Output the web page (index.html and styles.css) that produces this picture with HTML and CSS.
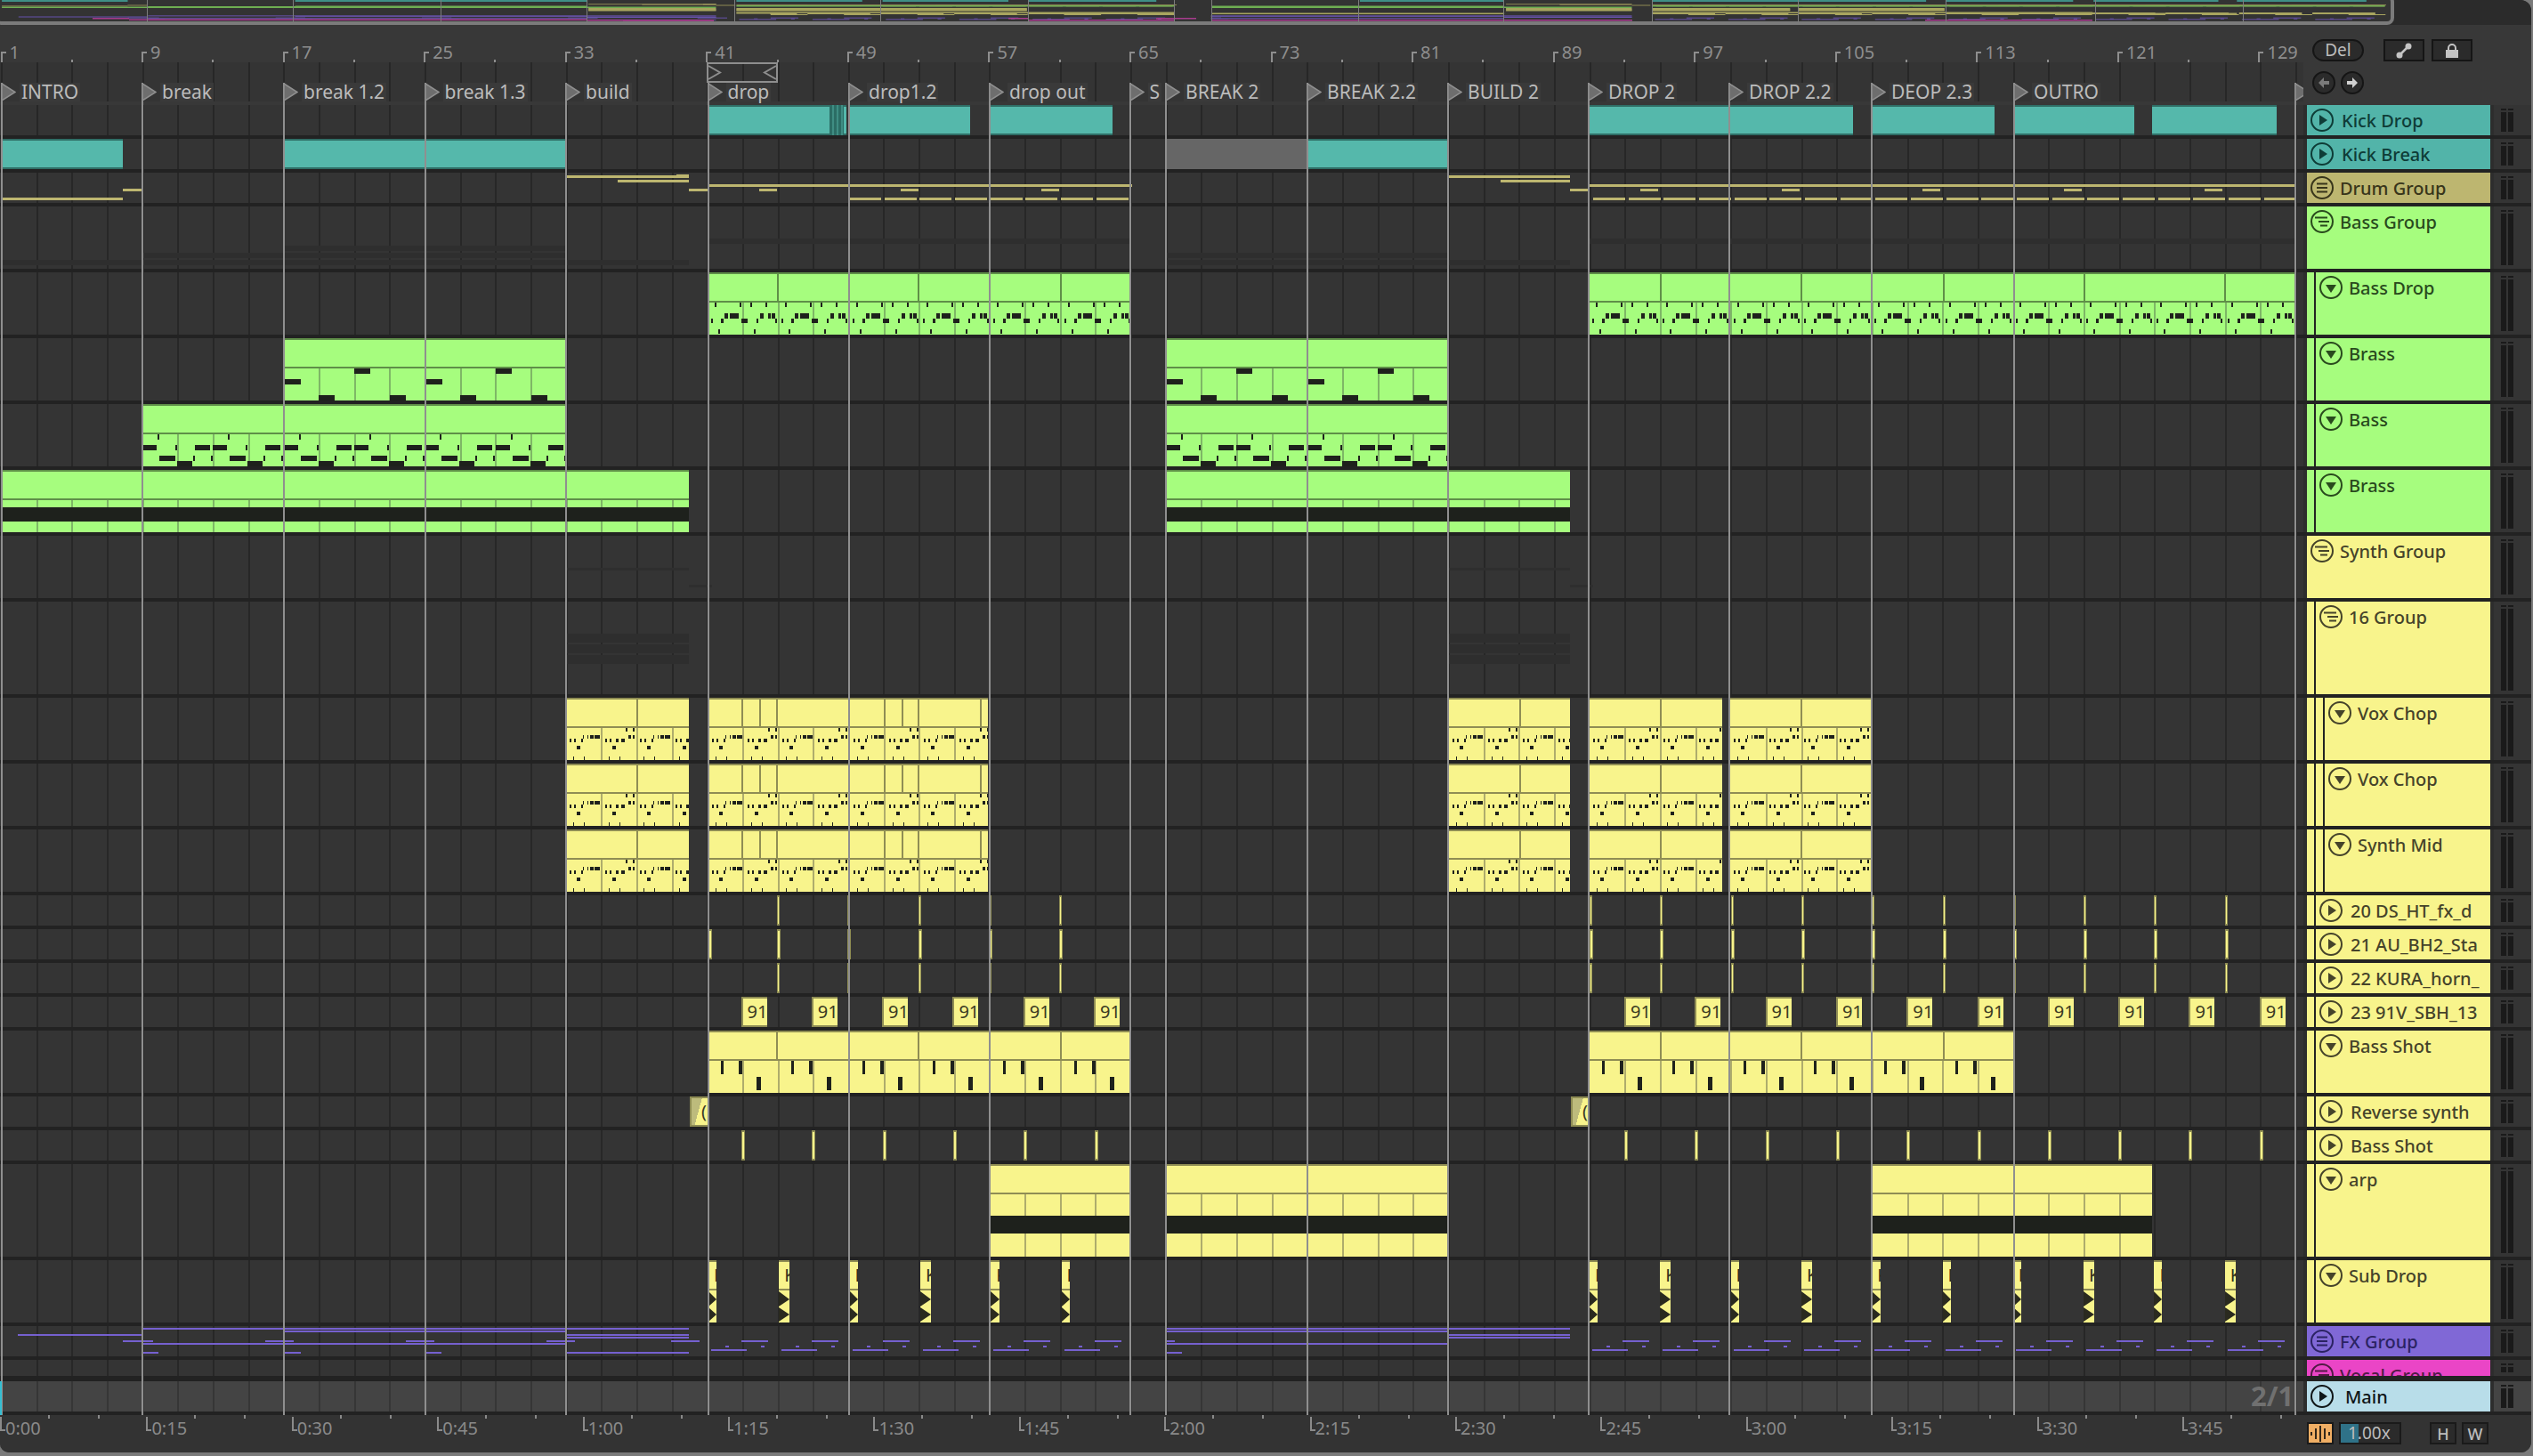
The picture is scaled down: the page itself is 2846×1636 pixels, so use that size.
FILE: index.html
```html
<!DOCTYPE html>
<html lang="en">
<head>
    <meta charset="UTF-8">
    <title>Arrangement View</title>
    <link rel="stylesheet" href="styles.css">
</head>
<body>
    <div class="app">
        <div class="overview" id="overview">
            <div class="overview-frame"></div>
        </div>

        <div class="top">
            <div class="timeline">
                <div class="ruler" id="ruler"></div>
                <div class="loop-lane grid">
                    <svg class="loop-brace" width="80" height="23" viewBox="0 0 80 23">
                        <rect x="1" y="1" width="78" height="21" fill="none" stroke="#8e8e8e" stroke-width="2"/>
                        <polyline points="2,4 15,11.500 2,19" fill="none" stroke="#8e8e8e" stroke-width="2"/>
                        <polyline points="78,4 65,11.500 78,19" fill="none" stroke="#8e8e8e" stroke-width="2"/>
                    </svg>
                </div>
            </div>
            <div class="top-controls">
                <div class="control-row">
                    <button class="pill">Del</button>
                    <button class="square-btn">
                        <svg width="22" height="22" viewBox="0 0 22 22">
                            <line x1="6" y1="16" x2="16" y2="6" stroke="#c4c4c4" stroke-width="2.500"/>
                            <circle cx="6" cy="16" r="3.500" fill="#c4c4c4"/>
                            <circle cx="16" cy="6" r="3.500" fill="#c4c4c4"/>
                        </svg>
                    </button>
                    <button class="square-btn">
                        <svg width="22" height="22" viewBox="0 0 22 22">
                            <path d="M7 11 V8 a4 4 0 0 1 8 0 V11" fill="none" stroke="#c4c4c4" stroke-width="2"/>
                            <rect x="4" y="10" width="14" height="9" fill="#c4c4c4"/>
                        </svg>
                    </button>
                </div>
                <div class="control-row arrows">
                    <button class="circle-btn">
                        <svg width="18" height="18" viewBox="0 0 18 18">
                            <path d="M9 3 L3 9 L9 15 V11 H15 V7 H9 Z" fill="#7b7b7b"/>
                        </svg>
                    </button>
                    <button class="circle-btn">
                        <svg width="18" height="18" viewBox="0 0 18 18">
                            <path d="M9 3 L15 9 L9 15 V11 H3 V7 H9 Z" fill="#d0d0d0"/>
                        </svg>
                    </button>
                </div>
            </div>
        </div>

        <div class="tracks" id="tracks"></div>

        <div class="bottom">
            <div class="time-ruler" id="timeRuler"></div>
            <div class="bottom-controls">
                <button class="wave-btn">
                    <svg width="24" height="18" viewBox="0 0 24 18">
                        <path d="M2 7 V11 M7 3 V15 M12 0 V18 M17 3 V15 M22 7 V11" stroke="#33271a" stroke-width="2" fill="none"/>
                    </svg>
                </button>
                <div class="zoom-box">
                    <div class="zoom-fill"></div>
                    <span>1.00x</span>
                </div>
                <button class="key-btn first-key">H</button>
                <button class="key-btn">W</button>
            </div>
        </div>

        <div class="locators" id="locators"></div>
        <div class="grid-label">2/1</div>
        <div class="play-start"></div>
    </div>

    <script src="app.js"></script>
</body>
</html>
```

FILE: styles.css
```css
* {
    box-sizing: border-box;
}

body {
    margin: 0;
    width: 2846px;
    height: 1636px;
    overflow: hidden;
    background-color: #7a7a7a;
    font-family: "Noto Sans", sans-serif;
}

button {
    font-family: inherit;
    padding: 0;
    margin: 0;
}

.app {
    position: relative;
    width: 2844px;
    height: 1632px;
    background-color: #383838;
    border-radius: 0 12px 12px 10px;
    overflow: hidden;
}

/* overview strip */
.overview {
    position: relative;
    height: 28px;
    background-color: #2b2b2b;
}

.overview svg {
    position: absolute;
    left: 0;
    top: 0;
}

.overview-frame {
    position: absolute;
    left: -6px;
    top: -6px;
    width: 2696px;
    height: 34px;
    border: 4px solid #7b7b7b;
    border-radius: 8px;
}

/* ruler + loop brace */
.top {
    display: flex;
    height: 90px;
}

.timeline {
    width: 2588px;
    margin-right: 4px;
}

.ruler {
    position: relative;
    height: 42px;
}

.ruler-mark {
    position: absolute;
    top: 20px;
    height: 22px;
    padding-left: 10px;
    font-size: 20px;
    line-height: 22px;
    color: #8e8e8e;
}

.ruler-mark::before {
    content: "";
    position: absolute;
    left: 0;
    top: 10px;
    width: 4px;
    height: 12px;
    border-left: 2px solid #8e8e8e;
    border-top: 2px solid #8e8e8e;
}

.ruler-tick {
    position: absolute;
    top: 39px;
    width: 2px;
    height: 3px;
    background-color: #8e8e8e;
}

.grid {
    background-color: #343434;
    background-image: repeating-linear-gradient(90deg, transparent 0 1px, #272727 1px 3px, transparent 3px 39.660px);
}

.loop-lane {
    position: relative;
    height: 44px;
}

.loop-brace {
    position: absolute;
    left: 794px;
    top: 0;
}

.top-controls {
    padding: 16px 0 0 6px;
}

.control-row {
    display: flex;
    gap: 8px;
}

.arrows {
    margin-top: 11px;
    gap: 6px;
}

.pill {
    width: 58px;
    height: 25px;
    margin-right: 14px;
    border: 2px solid #151515;
    border-radius: 13px;
    background-color: #2b2b2b;
    color: #bcbcbc;
    font-size: 19px;
    line-height: 19px;
}

.square-btn {
    display: flex;
    align-items: center;
    justify-content: center;
    width: 46px;
    height: 25px;
    border: 2px solid #151515;
    background-color: #2b2b2b;
}

.circle-btn {
    display: flex;
    align-items: center;
    justify-content: center;
    width: 26px;
    height: 26px;
    border: 2px solid #151515;
    border-radius: 50%;
    background-color: #2b2b2b;
}

/* tracks */
.tracks {
    display: flex;
    flex-direction: column;
    gap: 4px;
    height: 1472px;
    background-color: #222;
}

.track {
    display: flex;
    flex-shrink: 0;
    background-color: #2d2d2d;
}

.track-main {
    margin-top: 2px;
}

.lane {
    position: relative;
    width: 2588px;
    margin-right: 4px;
    overflow: hidden;
}

.track-main .lane {
    background-color: #444;
    background-image: repeating-linear-gradient(90deg, transparent 0 1px, #363636 1px 3px, transparent 3px 39.660px);
}

.teal { --clip: #55b8ab; --edge: #2f6e66; --head: #52b4a9; --ink: #0e3c37; }
.olive { --clip: #bdb670; --edge: #7d7a4c; --head: #bdb670; --ink: #38351a; }
.green { --clip: #a6fd7e; --edge: #5f8f48; --soft: #7eb766; --head: #a6fd7e; --ink: #294a1d; }
.yellow { --clip: #f8f48c; --edge: #8f8d54; --soft: #aeac6c; --head: #f8f48c; --ink: #45432a; }
.purple { --clip: #7560cf; --head: #8068d6; --ink: #2b2363; }
.magenta { --head: #ea45c6; --ink: #521a45; }
.sky { --head: #b8dde9; --ink: #0f1517; }

.block {
    position: absolute;
    top: 0;
    bottom: 0;
    background-color: var(--clip);
    border-top: 2px solid var(--edge);
    border-bottom: 2px solid var(--edge);
}

.muted-block {
    position: absolute;
    top: 0;
    bottom: 0;
    background-color: #666;
}

.hatch {
    position: absolute;
    top: 0;
    bottom: 0;
    background-image: repeating-linear-gradient(90deg, #2b6d65 0 3px, #3f8d83 3px 5px);
}

.spike {
    position: absolute;
    top: 0;
    bottom: 0;
    background-color: var(--clip);
    border: 2px solid var(--edge);
    border-left-width: 1px;
    border-right-width: 1px;
}

.tag {
    position: absolute;
    top: 0;
    bottom: 0;
    padding-left: 5px;
    overflow: hidden;
    background-color: var(--clip);
    border-top: 2px solid var(--edge);
    border-bottom: 2px solid var(--edge);
    border-left: 2px solid var(--edge);
    color: #3a3922;
    font-size: 20px;
    line-height: 30px;
    white-space: nowrap;
}

.fade-tag {
    padding-left: 11px;
    background-image: linear-gradient(105deg, #bdbb7c 0 45%, var(--clip) 45%);
}

.ghost {
    position: absolute;
    background-color: #2e2e2e;
}

.line {
    position: absolute;
}

.clip {
    position: absolute;
    top: 0;
    bottom: 0;
    display: flex;
    flex-direction: column;
    overflow: hidden;
    background-color: var(--clip);
    border-top: 2px solid var(--edge);
}

.clip-title {
    position: relative;
    flex: 0 0 30px;
    border-bottom: 0;
    padding-left: 6px;
    color: #302f1b;
    font-size: 20px;
    line-height: 30px;
    white-space: nowrap;
}

.clip-notes {
    position: relative;
    flex: 1;
    border-top: 2px solid var(--edge);
}

.clip-notes svg {
    position: absolute;
    left: 0;
    top: 0;
}

.title-line {
    position: absolute;
    top: 0;
    bottom: 0;
    width: 2px;
    background-color: var(--edge);
}

.note-line {
    position: absolute;
    top: 0;
    bottom: 0;
    width: 2px;
    background-color: var(--soft);
}

.note {
    position: absolute;
    background-color: #1e211c;
}

/* track header */
.head {
    display: flex;
    width: 206px;
    margin-right: 4px;
    overflow: hidden;
}

.indent {
    flex: 0 0 8px;
    margin-top: -4px;
    background-color: var(--head);
    border-right: 0;
}

.indent-line {
    flex: 0 0 2px;
    margin-top: -4px;
    background-color: #222;
}

.head-body {
    flex: 1;
    background-color: var(--head);
    color: var(--ink);
    padding-left: 4px;
}

.head-line {
    display: flex;
    align-items: center;
    gap: 7px;
    height: 34px;
    font-size: 20px;
    font-weight: 500;
    white-space: nowrap;
    overflow: hidden;
}

.play-name {
    margin-left: 2px;
}

.main-name {
    margin-left: 6px;
}

.track-icon {
    flex: none;
}

.track-meter {
    display: flex;
    gap: 2px;
    flex: 1;
    padding: 4px 0 4px 8px;
    background-color: #343434;
    overflow: hidden;
}

.track-main .track-meter {
    background-color: #444;
}

.meter-bar {
    width: 6px;
    background-image: linear-gradient(#1a1a1a 0 2px, transparent 2px 4px, #1a1a1a 4px);
}

.bottom {
    display: flex;
    height: 42px;
    background-color: #333;
}

.time-ruler {
    position: relative;
    width: 2592px;
}

.time-mark {
    position: absolute;
    top: 0;
    height: 30px;
    padding: 3px 0 0 6px;
    font-size: 20px;
    line-height: 24px;
    color: #8a8a8a;
}

.time-mark::before {
    content: "";
    position: absolute;
    left: 0;
    top: 2px;
    width: 4px;
    height: 14px;
    border-left: 2px solid #8a8a8a;
    border-bottom: 2px solid #8a8a8a;
}

.time-tick {
    position: absolute;
    top: 0;
    width: 2px;
    height: 4px;
    background-color: #8a8a8a;
}

.bottom-controls {
    display: flex;
    align-items: flex-start;
    padding-top: 8px;
}

.wave-btn {
    display: flex;
    align-items: center;
    justify-content: center;
    width: 30px;
    height: 25px;
    border: 2px solid #1a1a1a;
    background-color: #f0ae64;
}

.zoom-box {
    position: relative;
    width: 70px;
    height: 25px;
    margin-left: 6px;
    border: 2px solid #1a1a1a;
    background-color: #2b2b2b;
    color: #bdbdbd;
    font-size: 19px;
    line-height: 21px;
    padding-left: 8px;
}

.zoom-box span {
    position: relative;
}

.zoom-fill {
    position: absolute;
    left: 0;
    top: 0;
    bottom: 0;
    width: 20px;
    background-color: #2f7288;
}

.key-btn {
    width: 30px;
    height: 25px;
    margin-left: 6px;
    border: 2px solid #1a1a1a;
    background-color: #2b2b2b;
    color: #bdbdbd;
    font-size: 18px;
    font-weight: 500;
    line-height: 20px;
}

.first-key {
    margin-left: 32px;
}

/* locators over the arrangement */
.locators {
    position: absolute;
    left: 0;
    top: 93px;
    width: 2588px;
    height: 1497px;
    overflow: hidden;
    pointer-events: none;
}

.locator {
    position: absolute;
    top: 0;
    bottom: 0;
    width: 2px;
    background-color: #8f8f8f;
}

.locator svg {
    position: absolute;
    left: 0;
    top: 0;
}

.locator-label {
    position: absolute;
    left: 21px;
    top: 0;
    height: 21px;
    padding: 0 2px;
    background-color: #3a3a3a;
    color: #bcbcbc;
    font-size: 21px;
    line-height: 21px;
    white-space: nowrap;
}

.grid-label {
    position: absolute;
    left: 2529px;
    top: 1551px;
    font-size: 31px;
    font-weight: 700;
    line-height: 34px;
    color: #707070;
}

.play-start {
    position: absolute;
    left: 0;
    top: 1552px;
    width: 2px;
    height: 38px;
    background-color: #35bfd3;
}
```

FILE: app.js
```js
const BAR = 19.82;
const barX = (bar) => 1.5 + (bar - 1) * BAR;
const BEAT_LINES = 39.66;
const PERIOD = 79.3;

// repeating note patterns: [offset, width, y, height]
const patterns = {
    bassDrop: { period: PERIOD, notes: [
        [7, 2, 0, 5], [35, 2, 0, 5], [47, 2, 0, 5], [64, 2, 0, 5],
        [18, 4, 12, 6], [24, 10, 12, 6], [58, 4, 12, 6], [67, 3, 12, 6], [71, 4, 12, 6],
        [3, 2, 18, 5], [14, 3, 18, 5], [37, 7, 18, 5], [54, 2, 18, 5], [75, 2, 18, 5],
        [11, 2, 30, 5], [51, 2, 30, 5]
    ] },
    brass: { period: 158.6, notes: [
        [1, 18, 12, 6], [39, 18, 30, 6], [79, 18, 0, 6], [119, 18, 30, 6]
    ] },
    bass: { period: PERIOD, notes: [
        [17, 2, 0, 6], [0, 16, 12, 6], [37, 2, 12, 6], [59, 17, 12, 6],
        [19, 18, 24, 6], [57, 2, 24, 6], [77, 2, 24, 6], [39, 17, 30, 6]
    ] },
    brassBand: { period: 2000, notes: [[0, 2000, 8, 16]] },
    arpBand: { period: 2000, notes: [[0, 2000, 24, 20]] },
    synth: { period: PERIOD, notes: [
        [67, 2, 0, 4], [75, 2, 0, 4],
        [19, 1, 8, 4], [24, 1, 8, 4], [27, 4, 8, 4], [32, 6, 8, 4], [70, 3, 8, 4], [75, 2, 8, 4],
        [4, 2, 12, 4], [9, 2, 12, 4], [17, 2, 12, 4], [44, 2, 12, 4], [49, 2, 12, 4], [56, 3, 12, 4], [62, 4, 12, 4],
        [12, 4, 20, 4], [52, 4, 20, 4],
        [8, 1, 32, 4], [20, 1, 32, 4], [48, 1, 32, 4], [60, 1, 32, 4]
    ] },
    shot: { period: PERIOD, notes: [
        [14, 3, 0, 15], [34, 4, 0, 15], [54, 5, 18, 15]
    ] }
};

const range = (start, step, count) => Array.from({ length: count }, (_, i) => start + i * step);

const synthClips = [
    { x: 636, end: 774, pattern: 'synth', cuts: [715] },
    { x: 796, end: 1110, pattern: 'synth', cuts: [833, 853, 872, 993, 1013, 1031, 1101] },
    { x: 1628, end: 1764, pattern: 'synth', cuts: [1707] },
    { x: 1786, end: 1935, pattern: 'synth', cuts: [1865] },
    { x: 1944, end: 2102, pattern: 'synth', cuts: [2023] }
];

// Each drop repeats the same lines: start is the first locator of the section
function drumLines(start, count) {
    const lines = [[start, start + count * 39.66 * 2, 207]];
    for (let i = 0; i < count / 2; i++) {
        lines.push([start + 57 + i * 158.6, start + 77 + i * 158.6, 212]);
    }
    return lines;
}

function dashes(start, end) {
    const lines = [];
    let x = start;
    while (x < end) {
        lines.push([x, Math.min(x + 36, end), 222]);
        x += 39.66;
    }
    return lines;
}

function fxDrop(start, repeats) {
    const lines = [];
    for (let i = 0; i < repeats; i++) {
        const at = start + i * PERIOD;
        lines.push([at + 37, at + 67, 16]);
        lines.push([at + 19, at + 23, 22]);
        lines.push([at + 59, at + 63, 22]);
        lines.push([at + 3, at + 43, 26]);
    }
    return lines;
}

const tracks = [
    { name: 'Kick Drop', h: 34, color: 'teal', icon: 'play', ov: 1, blocks: [[796, 932], [954, 1090], [1112, 1250], [1786, 2082], [2103, 2241], [2263, 2398], [2418, 2558]], hatches: [[932, 948]], extraBlocks: [[948, 951]] },
    { name: 'Kick Break', h: 34, color: 'teal', icon: 'play', ov: 1, blocks: [[2, 138], [319, 635], [1470, 1626]], mutedBlocks: [[1310, 1468]] },
    {
        name: 'Drum Group', h: 34, color: 'olive', icon: 'group', ov: 4,
        lines: [
            [636, 774, 197], [694, 774, 202], [138, 159, 212], [774, 795, 212], [2, 138, 222],
            [760, 774, 196], [760, 774, 202],
            [1628, 1764, 197], [1686, 1764, 202], [1764, 1784, 212]
        ].concat(drumLines(796, 6), dashes(954, 1269), drumLines(1786, 10), dashes(1790, 2578)),
        lineTop: 194, lineHeight: 3
    },
    {
        name: 'Bass Group', h: 70, color: 'green', icon: 'open-group', ov: 5,
        ghosts: [[796, 1269, 36, 6], [319, 635, 44, 6], [159, 635, 52, 6], [2, 774, 60, 6], [1786, 2578, 36, 6], [1309, 1626, 52, 6], [1309, 1764, 60, 6]]
    },
    { name: 'Bass Drop', h: 70, color: 'green', icon: 'down', depth: 1, ov: 6, clips: [
        { x: 796, end: 1269, pattern: 'bassDrop', cuts: [873, 1031, 1191] },
        { x: 1786, end: 2578, pattern: 'bassDrop', cuts: [1865, 2023, 2183, 2341, 2499] }
    ] },
    { name: 'Brass', h: 70, color: 'green', icon: 'down', depth: 1, ov: 6.500, clips: [
        { x: 319, end: 635, pattern: 'brass', origin: 319 },
        { x: 1310, end: 1626, pattern: 'brass' }
    ] },
    { name: 'Bass', h: 70, color: 'green', icon: 'down', depth: 1, ov: 7, clips: [
        { x: 160, end: 635, pattern: 'bass', origin: 160 },
        { x: 1310, end: 1626, pattern: 'bass' }
    ] },
    { name: 'Brass', h: 70, color: 'green', icon: 'down', depth: 1, ov: 7.500, clips: [
        { x: 2, end: 774, pattern: 'brassBand' },
        { x: 1310, end: 1764, pattern: 'brassBand' }
    ] },
    {
        name: 'Synth Group', h: 70, color: 'yellow', icon: 'open-group', ov: 8,
        ghosts: [[636, 774, 36, 3], [774, 800, 55, 3], [1628, 1764, 36, 3], [1764, 1790, 55, 3]]
    },
    {
        name: '16 Group', h: 104, color: 'yellow', icon: 'open-group', depth: 1, ov: 8.500,
        ghosts: [[636, 774, 36, 10], [636, 774, 48, 10], [636, 774, 60, 10], [1628, 1764, 36, 10], [1628, 1764, 48, 10], [1628, 1764, 60, 10]]
    },
    { name: 'Vox Chop', h: 70, color: 'yellow', icon: 'down', depth: 2, ov: 9, clips: synthClips },
    { name: 'Vox Chop', h: 70, color: 'yellow', icon: 'down', depth: 2, ov: 10, clips: synthClips },
    { name: 'Synth Mid', h: 70, color: 'yellow', icon: 'down', depth: 2, ov: 11, clips: synthClips },
    { name: '20 DS_HT_fx_d', h: 34, color: 'yellow', icon: 'play', depth: 1, ov: 12, spikes: range(873, PERIOD, 5).concat(range(1786, PERIOD, 10)), spikeWidth: 3 },
    { name: '21 AU_BH2_Sta', h: 34, color: 'yellow', icon: 'play', depth: 1, ov: 12.500, spikes: [796].concat(range(873, PERIOD, 5), range(1786, PERIOD, 10)), spikeWidth: 4 },
    { name: '22 KURA_horn_', h: 34, color: 'yellow', icon: 'play', depth: 1, ov: 13, spikes: range(873, PERIOD, 5).concat(range(1786, PERIOD, 10)), spikeWidth: 3 },
    { name: '23 91V_SBH_13', h: 34, color: 'yellow', icon: 'play', depth: 1, ov: 13, tags: range(832.500, PERIOD, 6).concat(range(1825, PERIOD, 10)), tagWidth: 29, tagText: '91' },
    { name: 'Bass Shot', h: 70, color: 'yellow', icon: 'down', depth: 1, ov: 13.500, clips: [
        { x: 796, end: 1269, pattern: 'shot', cuts: [872, 1031, 1191] },
        { x: 1786, end: 2262, pattern: 'shot', cuts: [1865, 2023, 2183] }
    ] },
    { name: 'Reverse synth', h: 34, color: 'yellow', icon: 'play', depth: 1, ov: 14, fades: [[775, 795], [1765, 1785]] },
    { name: 'Bass Shot', h: 34, color: 'yellow', icon: 'play', depth: 1, ov: 14, spikes: range(833, PERIOD, 6).concat(range(1825, PERIOD, 10)), spikeWidth: 4 },
    { name: 'arp', h: 104, color: 'yellow', icon: 'down', depth: 1, ov: 14.500, clips: [
        { x: 1112, end: 1269, pattern: 'arpBand' },
        { x: 1310, end: 1626, pattern: 'arpBand' },
        { x: 2103, end: 2418, pattern: 'arpBand' }
    ] },
    { name: 'Sub Drop', h: 70, color: 'yellow', icon: 'down', depth: 1, ov: 15, drops: range(796, PERIOD, 6).concat(range(1786, PERIOD, 10)) },
    {
        name: 'FX Group', h: 34, color: 'purple', icon: 'group', ov: 17,
        lineTop: 0, lineHeight: 2,
        lines: [
            [160, 774, 2], [319, 635, 5], [20, 159, 9], [635, 774, 9], [635, 774, 12],
            [138, 172, 16], [298, 330, 16], [456, 488, 16], [614, 646, 16], [754, 786, 16],
            [160, 635, 19], [160, 178, 29], [319, 338, 29], [478, 496, 29], [636, 774, 29],
            [1309, 1764, 2], [1309, 1626, 5], [1626, 1764, 9], [1626, 1764, 12],
            [1309, 1320, 16], [1309, 1626, 19], [1309, 1328, 29]
        ].concat(fxDrop(796, 6), fxDrop(1786, 10))
    },
    { name: 'Vocal Group', h: 18, color: 'magenta', icon: 'open-group', ov: 21 },
    { name: 'Main', h: 34, color: 'sky', icon: 'play', main: true }
];

const locators = [
    [1, 'INTRO'], [159, 'break'], [318, 'break 1.2'], [476.500, 'break 1.3'], [635, 'build'],
    [794.500, 'drop'], [953, 'drop1.2'], [1111, 'drop out'], [1268.500, 'S'], [1309, 'BREAK 2'],
    [1468, 'BREAK 2.2'], [1626, 'BUILD 2'], [1784, 'DROP 2'], [1942, 'DROP 2.2'], [2102, 'DEOP 2.3'],
    [2262, 'OUTRO'], [2578, '']
];

// letters cut off by the short Sub Drop clips
const dropLetters = ['D', 'K', 'D', 'K', 'K', 'D'];
const dropWidths = [9, 12, 9, 12, 10, 9];

function el(className, parent, text) {
    const node = document.createElement('div');
    node.className = className;
    if (text !== undefined) node.textContent = text;
    if (parent) parent.appendChild(node);
    return node;
}

function place(node, x, end) {
    node.style.left = `${x}px`;
    node.style.width = `${end - x}px`;
    return node;
}

function iconSvg(type) {
    let glyph = '';
    if (type === 'play') glyph = '<polygon points="10,7 10,19 19,13" fill="currentColor"/>';
    if (type === 'down') glyph = '<polygon points="7,10 19,10 13,19" fill="currentColor"/>';
    if (type === 'group') glyph = '<path d="M7 8.500 H19 M7 13 H19 M7 17.500 H19" stroke="currentColor" stroke-width="2"/>';
    if (type === 'open-group') glyph = '<path d="M5 8.500 H19 M9 13 H21 M11 17.500 H19" stroke="currentColor" stroke-width="2"/>';
    return `<svg class="track-icon" width="26" height="26" viewBox="0 0 26 26"><circle cx="13" cy="13" r="12" fill="none" stroke="currentColor" stroke-width="2"/>${glyph}</svg>`;
}

function renderClip(lane, clip) {
    const box = place(el('clip', lane), clip.x, clip.end);
    const title = el('clip-title', box);
    (clip.cuts || []).forEach((cut) => {
        el('title-line', title).style.left = `${cut - clip.x}px`;
    });
    const notes = el('clip-notes', box);
    // bar lines follow the global grid, not the clip
    for (let x = 1 + BEAT_LINES * Math.ceil(clip.x / BEAT_LINES); x < clip.end; x += BEAT_LINES) {
        el('note-line', notes).style.left = `${x - clip.x}px`;
    }
    const pattern = patterns[clip.pattern];
    const origin = clip.origin || clip.x;
    for (let start = origin; start < clip.end; start += pattern.period) {
        pattern.notes.forEach(([offset, width, y, height]) => {
            const note = el('note', notes);
            note.style.left = `${start + offset - clip.x}px`;
            note.style.width = `${width}px`;
            note.style.top = `${y}px`;
            note.style.height = `${height}px`;
        });
    }
}

function renderDrop(lane, x, i) {
    const width = dropWidths[i % 6];
    const box = place(el('clip', lane), x, x + width);
    el('clip-title', box, dropLetters[i % 6]);
    const notes = el('clip-notes', box);
    notes.innerHTML = `<svg width="${width}" height="36"><polygon points="0,1 ${width},10 0,18" fill="#2a2a1f"/><polygon points="0,19 ${width},27 0,35" fill="#2a2a1f"/></svg>`;
}

function renderLane(lane, track) {
    (track.blocks || []).forEach(([x, end]) => place(el('block', lane), x, end));
    (track.extraBlocks || []).forEach(([x, end]) => place(el('block', lane), x, end));
    (track.hatches || []).forEach(([x, end]) => place(el('hatch', lane), x, end));
    (track.mutedBlocks || []).forEach(([x, end]) => place(el('muted-block', lane), x, end));
    (track.ghosts || []).forEach(([x, end, y, height]) => {
        const ghost = place(el('ghost', lane), x, end);
        ghost.style.top = `${y}px`;
        ghost.style.height = `${height}px`;
    });
    (track.lines || []).forEach(([x, end, y]) => {
        const line = place(el('line', lane), x, end);
        line.style.top = `${y - track.lineTop}px`;
        line.style.height = `${track.lineHeight}px`;
        line.style.backgroundColor = 'var(--clip)';
    });
    (track.clips || []).forEach((clip) => renderClip(lane, clip));
    (track.spikes || []).forEach((x) => place(el('spike', lane), x, x + track.spikeWidth));
    (track.tags || []).forEach((x) => place(el('tag', lane, track.tagText), x, x + track.tagWidth));
    (track.fades || []).forEach(([x, end]) => place(el('tag fade-tag', lane, '('), x, end));
    (track.drops || []).forEach((x, i) => renderDrop(lane, x, i));
}

function renderHead(row, track, parentColor) {
    const head = el(`head ${track.color}`, row);
    const depth = track.depth || 0;
    for (let i = 0; i < depth; i++) {
        el(`indent ${parentColor}`, head);
        el('indent-line', head);
    }
    const body = el('head-body', head);
    const line = el('head-line', body);
    line.innerHTML = iconSvg(track.icon);
    const name = el(track.main ? 'main-name' : track.icon === 'play' ? 'play-name' : 'head-name', line, track.name);
    return name;
}

function renderTracks() {
    const root = document.getElementById('tracks');
    let groupColor = 'green';
    tracks.forEach((track) => {
        if (!track.depth) groupColor = track.color;
        const row = el(`track ${track.main ? 'track-main' : ''}`, root);
        row.style.height = `${track.h}px`;
        const lane = el(`lane grid ${track.color}`, row);
        renderLane(lane, track);
        renderHead(row, track, groupColor);
        const meter = el('track-meter', row);
        el('meter-bar', meter);
        el('meter-bar', meter);
    });
}

function renderRuler() {
    const ruler = document.getElementById('ruler');
    for (let bar = 1; bar <= 129; bar += 8) {
        el('ruler-mark', ruler, String(bar)).style.left = `${barX(bar) - 1}px`;
        if (bar < 129) el('ruler-tick', ruler).style.left = `${barX(bar + 4) - 1}px`;
    }
}

function renderTimeRuler() {
    const ruler = document.getElementById('timeRuler');
    for (let i = 0; i < 16; i++) {
        const total = i * 15;
        const label = `${Math.floor(total / 60)}:${String(total % 60).padStart(2, '0')}`;
        const x = i === 0 ? 0 : 1 + i * 163.4;
        el('time-mark', ruler, label).style.left = `${x}px`;
        el('time-tick', ruler).style.left = `${x + 54}px`;
        el('time-tick', ruler).style.left = `${x + 110}px`;
    }
}

function renderLocators() {
    const root = document.getElementById('locators');
    locators.forEach(([x, label]) => {
        const mark = el('locator', root);
        mark.style.left = `${x}px`;
        mark.innerHTML = '<svg width="17" height="21" viewBox="0 0 17 21"><polygon points="1,1 16,10.500 1,20" fill="#6e6e6e" stroke="#8f8f8f" stroke-width="1.500"/></svg>';
        if (label) el('locator-label', mark, label);
    });
}

// The overview replays the same clips at a smaller scale
function renderOverview() {
    const scaleX = 1.0394;
    const colors = { teal: '#3f8f86', olive: '#8f8a55', green: '#6fae52', yellow: '#a8a55f', purple: '#6753ab' };
    let rects = '<rect width="2690" height="24" fill="#333"/>';
    const addRect = (x, end, y, height, fill) => {
        rects += `<rect x="${(x * scaleX).toFixed(1)}" y="${y}" width="${((end - x) * scaleX).toFixed(1)}" height="${height}" fill="${fill}"/>`;
    };
    tracks.forEach((track) => {
        const fill = colors[track.color];
        if (!fill || track.ov === undefined) return;
        (track.blocks || []).forEach(([x, end]) => addRect(x, end, track.ov - 1, 2, fill));
        (track.clips || []).forEach((clip) => addRect(clip.x, clip.end, track.ov, 1.500, fill));
        (track.lines || []).forEach(([x, end, y]) => {
            const offset = track.lineTop ? (y - track.lineTop) / 12 : y / 6;
            addRect(x, end, track.ov + offset, 1, fill);
        });
        (track.spikes || []).forEach((x) => addRect(x, x + 40, track.ov + 2, 1, fill));
        (track.tags || []).forEach((x) => addRect(x, x + 29, track.ov + 1, 2, fill));
    });
    [[104, 145, 20], [145, 659, 21.500], [700, 802, 22], [659, 802, 22], [1133, 1155, 20], [1156, 1319, 22],
        [1299, 1344, 20], [1362, 1689, 22], [1689, 1834, 22], [2163, 2351, 22]].forEach(([x, end, y]) => {
        rects += `<rect x="${x}" y="${y}" width="${end - x}" height="1.500" fill="#a83c8e"/>`;
    });
    [165, 329, 495, 659, 825, 989, 1155, 1319, 1361, 1526, 1689, 1856, 2020, 2186, 2354, 2520].forEach((x) => {
        rects += `<rect x="${x}" y="0" width="1" height="24" fill="#7d7d7d"/>`;
    });
    const overview = document.getElementById('overview');
    overview.insertAdjacentHTML('afterbegin', `<svg width="2690" height="24">${rects}</svg>`);
}

renderOverview();
renderRuler();
renderTracks();
renderTimeRuler();
renderLocators();
```
